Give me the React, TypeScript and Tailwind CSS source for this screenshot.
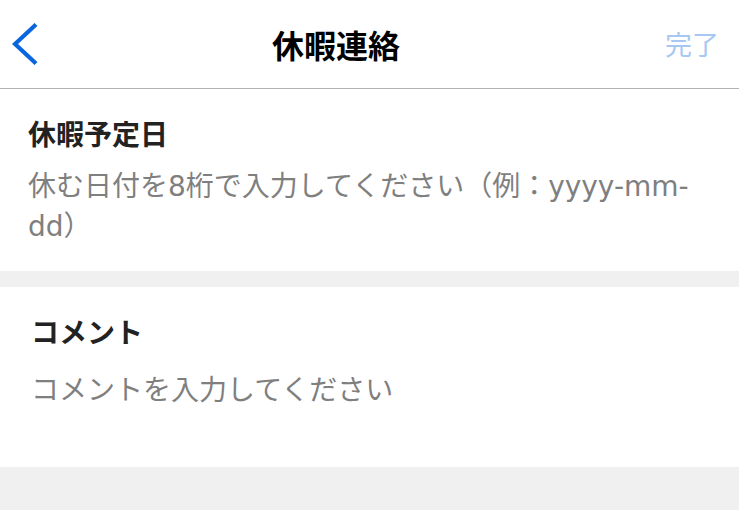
import React from "react";

export default function App() {
  const cjk = { fontFamily: '"Noto Sans CJK JP", sans-serif' };
  const body = { fontFamily: '"DejaVu Sans", "Noto Sans CJK JP", sans-serif' };
  return (
    <div className="w-[739px] h-[510px] bg-[#f0f0f0] flex flex-col overflow-hidden" style={cjk}>
      <header className="h-[89px] bg-white border-b border-[#b3b3b3] flex items-center shrink-0">
        <svg width="26" height="42" viewBox="0 0 26 42" className="ml-[12px] shrink-0">
          <polyline points="24,1.5 3,21 24,40.5" fill="none" stroke="#0a66dc" strokeWidth="4.2" strokeLinejoin="miter" />
        </svg>
        <h1 className="ml-[234px] text-[32px] leading-[40px] font-bold text-black">休暇連絡</h1>
        <div className="flex-1" />
        <button className="mr-[20px] text-[27px] leading-[40px] text-[#a6c8f2]">完了</button>
      </header>

      <section className="bg-white pl-[28px] pr-[28px] pt-6 pb-6">
        <h2 className="text-[28px] leading-[40px] font-bold text-[#222222]">休暇予定日</h2>
        <p className="mt-[14px] text-[28px] leading-[40px] text-[#7f7f7f]" style={body}>休む日付を8桁で入力してください（例：yyyy-mm-dd）</p>
      </section>

      <div className="h-[16px] shrink-0" />

      <section className="bg-white px-[28px] pt-6 pb-6">
        <h2 className="ml-[3px] text-[28px] leading-[40px] font-bold text-[#222222]">コメント</h2>
        <div className="mt-[17px] h-[75px] ml-[3px] text-[28px] leading-[40px] text-[#7f7f7f]">コメントを入力してください</div>
      </section>
    </div>
  );
}
